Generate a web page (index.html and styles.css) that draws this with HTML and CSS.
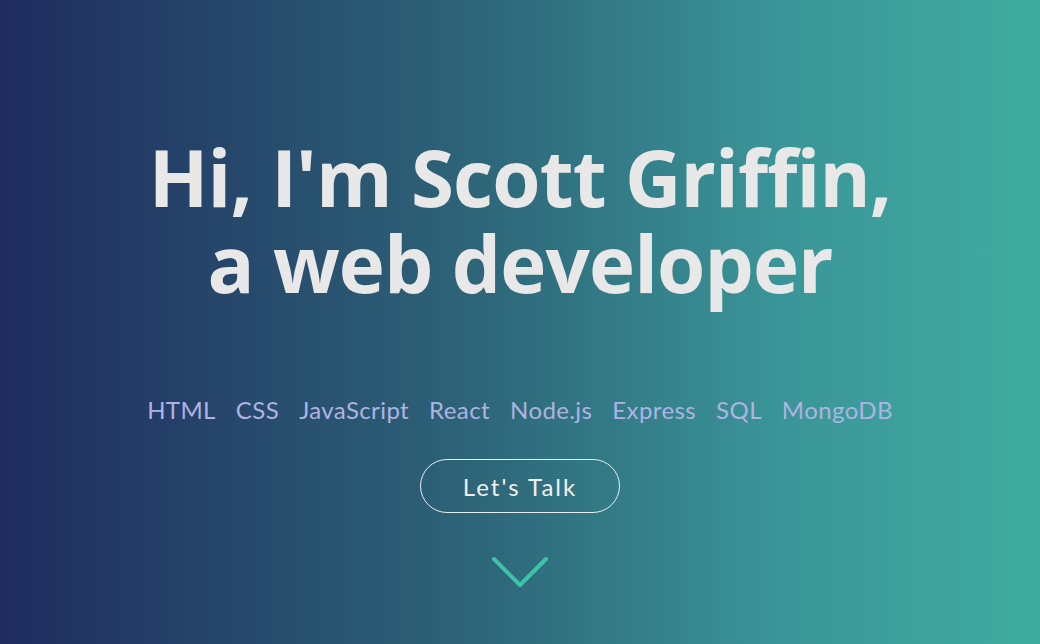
FILE: index.html
```html
<!DOCTYPE html>
<html lang="en">
<head>
<meta charset="utf-8">
<title>Scott Griffin</title>
<link rel="stylesheet" href="styles.css">
</head>
<body>
<header class="hero">
  <h1 class="hero-title"><span class="line">Hi, I'm Scott Griffin,</span><span class="line">a web developer</span></h1>
  <ul class="skills">
    <li>HTML</li>
    <li>CSS</li>
    <li>JavaScript</li>
    <li>React</li>
    <li>Node.js</li>
    <li>Express</li>
    <li>SQL</li>
    <li>MongoDB</li>
  </ul>
  <a class="cta" href="#contact">Let's Talk</a>
  <a class="scroll" href="#about" aria-label="Scroll down">
    <svg width="60" height="34" viewBox="0 0 60 34"><polyline points="4,3 30,29 56,3" fill="none" stroke="#3cc3a8" stroke-width="4" stroke-linecap="round" stroke-linejoin="round"/></svg>
  </a>
</header>
</body>
</html>
```
FILE: styles.css
```css
html, body {
  margin: 0;
  padding: 0;
  height: 100%;
}
body {
  font-family: "Open Sans", "Liberation Sans", sans-serif;
}
.hero {
  height: 644px;
  box-sizing: border-box;
  background: linear-gradient(90deg, #1f2b5e 0%, #2d6478 45%, #3a9598 75%, #3fac9f 100%);
  display: flex;
  flex-direction: column;
  align-items: center;
  padding-top: 145px;
}
.hero-title {
  margin: 0;
  font-family: "Open Sans", "Noto Sans", sans-serif;
  font-weight: 700;
  font-size: 78px;
  letter-spacing: -0.9px;
  color: #e8e8e8;
  text-align: center;
  display: flex;
  flex-direction: column;
  align-items: center;
}
.line {
  display: block;
  line-height: 64px;
}
.line + .line {
  margin-top: 22px;
}
.skills {
  list-style: none;
  margin: 100px 0 0;
  padding: 0;
  display: flex;
  gap: 20px;
  font-family: "Lato", "Open Sans", sans-serif;
  font-size: 24px;
  letter-spacing: 0.4px;
  color: #aeb3e2;
  line-height: 30px;
}
.cta {
  margin-top: 34px;
  width: 200px;
  height: 54px;
  box-sizing: border-box;
  border: 1px solid #e6eef0;
  border-radius: 27px;
  display: flex;
  align-items: center;
  justify-content: center;
  color: #f0f0f0;
  text-decoration: none;
  font-family: "Lato", sans-serif;
  font-size: 24px;
  letter-spacing: 2px;
}
.scroll {
  margin-top: 43px;
  display: block;
  line-height: 0;
}
```
